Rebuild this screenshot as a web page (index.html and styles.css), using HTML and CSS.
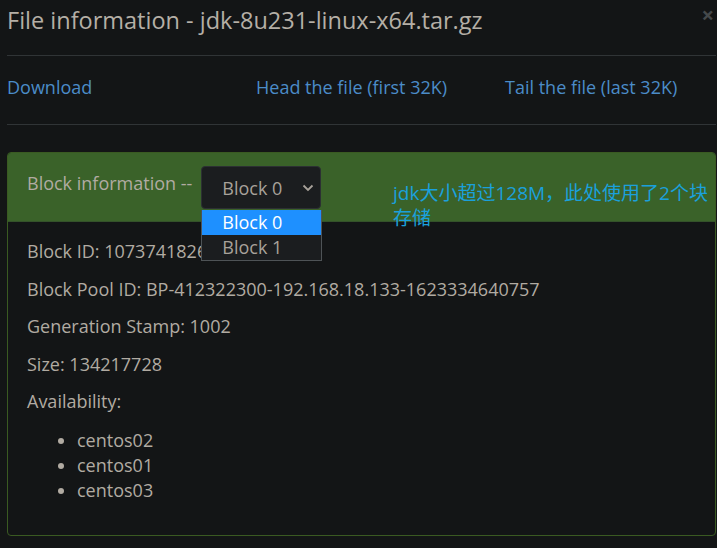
FILE: index.html
```html
<!DOCTYPE html>
<html>
<head>
<meta charset="utf-8">
<link rel="stylesheet" href="styles.css">
</head>
<body>
<div class="modal">
  <div class="modal-header">
    <h4 class="modal-title">File information - jdk-8u231-linux-x64.tar.gz</h4>
    <span class="close">×</span>
  </div>
  <div class="links">
    <a class="link">Download</a>
    <a class="link">Head the file (first 32K)</a>
    <a class="link last">Tail the file (last 32K)</a>
  </div>
  <div class="panel">
    <div class="panel-heading">
      <span class="heading-label">Block information --</span>
      <div class="select-wrap">
        <div class="select">
          <span>Block 0</span>
          <svg class="chev" width="12" height="8" viewBox="0 0 12 8"><path d="M1.5 1.5 L6 6 L10.5 1.5" fill="none" stroke="#a8a29a" stroke-width="1.8"/></svg>
        </div>
        <ul class="options">
          <li class="opt active">Block 0</li>
          <li class="opt">Block 1</li>
        </ul>
      </div>
      <div class="note">jdk大小超过128M，此处使用了2个块存储</div>
    </div>
    <div class="panel-body">
      <p>Block ID: 1073741826</p>
      <p>Block Pool ID: BP-412322300-192.168.18.133-1623334640757</p>
      <p>Generation Stamp: 1002</p>
      <p>Size: 134217728</p>
      <p>Availability:</p>
      <ul class="hosts">
        <li>centos02</li>
        <li>centos01</li>
        <li>centos03</li>
      </ul>
    </div>
  </div>
</div>
</body>
</html>
```
FILE: styles.css
```css
html, body {
  margin: 0;
  padding: 0;
  background: #131516;
}
body {
  font-family: "Open Sans", "Noto Sans CJK SC", sans-serif;
  color: #b1aba2;
  font-size: 18px;
}
.modal {
  padding-left: 7px;
  width: 709px;
}
.modal-header {
  position: relative;
  height: 55px;
  border-bottom: 1px solid #303436;
}
.modal-title {
  margin: 0;
  font-weight: normal;
  font-size: 23.5px;
  line-height: 40px;
  color: #b5afa6;
}
.close {
  position: absolute;
  right: 2px;
  top: 1px;
  font-size: 22px;
  font-weight: bold;
  color: #45494b;
  line-height: 26px;
}
.links {
  display: flex;
  height: 68px;
  align-items: center;
  border-bottom: 1px solid #303436;
}
.link {
  flex: 0 0 249px;
  color: #4b8cc8;
  font-size: 18px;
  margin-top: -6px;
}
.link.last {
  flex: 0 1 auto;
}
.panel {
  margin-top: 27px;
  border: 1px solid #3a5a22;
  border-radius: 4px;
}
.panel-heading {
  position: relative;
  background: #3a6229;
  height: 68px;
  display: flex;
  align-items: center;
  padding-left: 19px;
  border-bottom: 1px solid #34522a;
  border-radius: 3px 3px 0 0;
}
.heading-label {
  font-size: 18px;
  margin-right: 9px;
  margin-top: -8px;
}
.select-wrap {
  position: relative;
}
.select {
  width: 120px;
  height: 43px;
  box-sizing: border-box;
  background: #1b1d1f;
  border: 1px solid #2c3033;
  border-radius: 4px;
  display: flex;
  align-items: center;
  justify-content: space-between;
  padding: 2px 6px 0 20px;
  font-size: 18px;
  color: #a8a29a;
}
.options {
  position: absolute;
  left: 0;
  top: 44px;
  margin: 0;
  padding: 0;
  list-style: none;
  width: 119px;
  border: 1px solid #4e5356;
  border-top: none;
  background: #1b1d1f;
  z-index: 2;
}
.opt {
  height: 25px;
  line-height: 25px;
  padding-left: 20px;
  font-size: 18px;
  color: #a8a29a;
}
.opt.active {
  background: #1e90ff;
  color: #ffffff;
}
.note {
  position: absolute;
  left: 385px;
  top: 28px;
  width: 318px;
  color: #1aa0dc;
  font-size: 19px;
  line-height: 25px;
}
.panel-body {
  padding: 16px 19px 32px 19px;
}
.panel-body p {
  margin: 0 0 10px;
  line-height: 27.5px;
}
.hosts {
  margin: 12px 0 0;
  padding-left: 50px;
}
.hosts li {
  line-height: 25px;
}
```
